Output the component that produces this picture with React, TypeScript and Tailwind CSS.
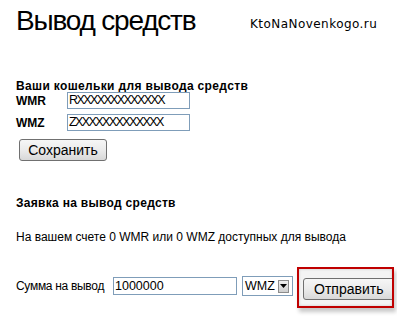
import React from "react";

const sans = { fontFamily: '"Liberation Sans", Arial, sans-serif' };

function Btn({ children, className = "" }: { children: React.ReactNode; className?: string }) {
  return (
    <div
      className={
        "flex items-center justify-center rounded-[3px] border border-[#707070] bg-gradient-to-b from-[#f6f6f6] via-[#ebebeb] to-[#d8d8d8] text-[14px] leading-[14px] text-black " +
        className
      }
    >
      {children}
    </div>
  );
}

export default function App() {
  return (
    <div
      className="relative w-[397px] h-[328px] overflow-hidden bg-white pl-[16px] text-black"
      style={sans}
    >
      <div
        className="absolute left-[250px] top-[18px] text-[12px] leading-[12px] tracking-[0.45px] text-black"
        style={{ fontFamily: '"DejaVu Sans", Verdana, sans-serif' }}
      >
        KtoNaNovenkogo.ru
      </div>

      <div className="pt-[7px] text-[28px] leading-[28px] tracking-[-1.2px]">Вывод средств</div>

      <div className="mt-[45px] text-[12px] leading-[12px] font-bold tracking-[0.35px]">Ваши кошельки для вывода средств</div>

      <div className="flex items-center h-[17px]">
        <div className="w-[51px] text-[12px] leading-[12px] font-bold">WMR</div>
        <div className="w-[123px] h-[17px] border border-[#7f9db9] bg-white pl-[1px] flex items-center text-[12.5px] leading-[12.5px] tracking-[-1.6px]">
          RXXXXXXXXXXXXX
        </div>
      </div>
      <div className="flex items-center h-[17px] mt-[5px]">
        <div className="w-[51px] text-[12px] leading-[12px] font-bold">WMZ</div>
        <div className="w-[123px] h-[17px] border border-[#7f9db9] bg-white pl-[1px] flex items-center text-[12.5px] leading-[12.5px] tracking-[-1.6px]">
          ZXXXXXXXXXXXXX
        </div>
      </div>

      <Btn className="ml-[3px] mt-[8px] w-[88px] h-[22px]">Сохранить</Btn>

      <div className="mt-[36px] text-[12px] leading-[12px] font-bold tracking-[0.3px]">Заявка на вывод средств</div>

      <div className="mt-[22px] text-[12px] leading-[12px]">
        На вашем счете 0 WMR или 0 WMZ доступных для вывода
      </div>

      <div className="mt-[24px] flex items-start">
        <div className="w-[97px] mt-[13px] text-[12px] leading-[12px] tracking-[-0.3px]">Сумма на вывод</div>
        <div className="mt-[10px] w-[124px] h-[18px] border border-[#7f9db9] bg-white pl-[1px] flex items-center text-[12.5px] leading-[12.5px]">
          1000000
        </div>
        <div className="ml-[5px] mt-[9px] w-[51px] h-[20px] border border-[#7f9db9] bg-white flex items-center">
          <span className="pl-[2px] text-[12.5px] leading-[12.5px]">WMZ</span>
          <div className="ml-auto mr-[3px] w-[11px] h-[13px] border border-[#8c8c8c] bg-gradient-to-b from-[#f0f0f0] to-[#cfcfcf] flex items-center justify-center">
            <svg width="7" height="4" viewBox="0 0 7 4">
              <path d="M0 0 H7 L3.5 4 Z" fill="#000" />
            </svg>
          </div>
        </div>
        <div className="ml-[4px] w-[97px] h-[41px] border-2 border-[#c00000] overflow-hidden bg-[#f4f4f4] shadow-[2px_4px_4px_rgba(0,0,0,0.22)]">
          <div className="w-full h-full pl-[4px] pt-[9px] shadow-[inset_0_0_3px_rgba(0,0,0,0.18)]">
            <Btn className="w-[95px] h-[22px] justify-start pl-[10px]">Отправить</Btn>
          </div>
        </div>
      </div>
    </div>
  );
}
